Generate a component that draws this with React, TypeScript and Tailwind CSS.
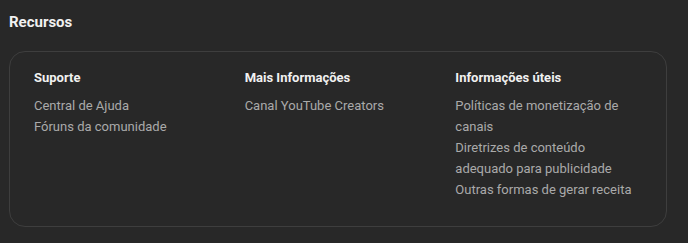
const columns = [
  {
    title: 'Suporte',
    links: ['Central de Ajuda', 'Fóruns da comunidade'],
  },
  {
    title: 'Mais Informações',
    links: ['Canal YouTube Creators'],
  },
  {
    title: 'Informações úteis',
    links: [
      'Políticas de monetização de canais',
      'Diretrizes de conteúdo adequado para publicidade',
      'Outras formas de gerar receita',
    ],
  },
];

export default function App() {
  return (
    <div className="w-[688px] h-[243px] bg-[#282828] pl-[9px] pt-[12px] font-['Roboto',sans-serif]">
      <h2 className="text-[15px] leading-[20px] font-bold text-[#f1f1f1]">Recursos</h2>
      <div className="mt-[19px] w-[658px] h-[176px] rounded-2xl border border-[#3e3e3e] px-6 pt-[16px]">
        <div className="grid grid-cols-3 gap-6">
          {columns.map(col => (
            <div key={col.title}>
              <h3 className="text-[13px] leading-[20px] font-bold text-[#f1f1f1]">{col.title}</h3>
              <ul className="mt-[7px]">
                {col.links.map(link => (
                  <li key={link} className="text-[13px] leading-[21px] text-[#aaaaaa]">
                    <a href="#">{link}</a>
                  </li>
                ))}
              </ul>
            </div>
          ))}
        </div>
      </div>
    </div>
  );
}
